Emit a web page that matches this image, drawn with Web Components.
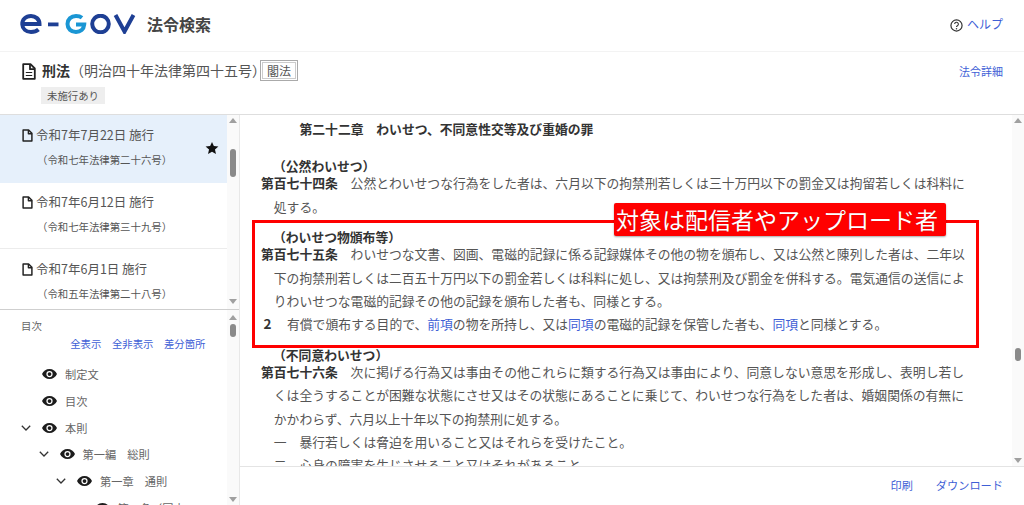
<!DOCTYPE html>
<html lang="ja"><head><meta charset="utf-8"><title>刑法</title>
<style>
html,body{margin:0;height:100%;overflow:hidden;background:#fff;font-family:"Noto Sans CJK JP","Noto Sans",sans-serif;color:#555}
</style></head><body>
<law-app>
  <site-header slot="header"></site-header>
  <law-bar slot="bar"></law-bar>
  <side-panel slot="side">
    <rev-list slot="list">
      <rev-item selected date="令和7年7月22日 施行" num="（令和七年法律第二十六号）"></rev-item>
      <rev-item date="令和7年6月12日 施行" num="（令和七年法律第三十九号）"></rev-item>
      <rev-item date="令和7年6月1日 施行" num="（令和五年法律第二十八号）"></rev-item>
    </rev-list>
    <toc-panel slot="toc">
      <toc-row level="0" label="制定文"></toc-row>
      <toc-row level="0" label="目次"></toc-row>
      <toc-row level="0" open label="本則"></toc-row>
      <toc-row level="1" open label="第一編　総則"></toc-row>
      <toc-row level="2" open label="第一章　通則"></toc-row>
      <toc-row level="3" label="第一条（国内"></toc-row>
    </toc-panel>
  </side-panel>
  <law-main slot="main">
    <law-title>第二十二章　わいせつ、不同意性交等及び重婚の罪</law-title>
    <law-caption>（公然わいせつ）</law-caption>
    <law-article head="第百七十四条">公然とわいせつな行為をした者は、六月以下の拘禁刑若しくは三十万円以下の罰金又は拘留若しくは科料に<br>処する。</law-article>
    <law-caption>（わいせつ物頒布等）</law-caption>
    <law-article head="第百七十五条">わいせつな文書、図画、電磁的記録に係る記録媒体その他の物を頒布し、又は公然と陳列した者は、二年以<br>下の拘禁刑若しくは二百五十万円以下の罰金若しくは科料に処し、又は拘禁刑及び罰金を併科する。電気通信の送信によ<br>りわいせつな電磁的記録その他の記録を頒布した者も、同様とする。</law-article>
    <law-para num="2">有償で頒布する目的で、<law-link>前項</law-link>の物を所持し、又は<law-link>同項</law-link>の電磁的記録を保管した者も、<law-link>同項</law-link>と同様とする。</law-para>
    <law-caption>（不同意わいせつ）</law-caption>
    <law-article head="第百七十六条">次に掲げる行為又は事由その他これらに類する行為又は事由により、同意しない意思を形成し、表明し若し<br>くは全うすることが困難な状態にさせ又はその状態にあることに乗じて、わいせつな行為をした者は、婚姻関係の有無に<br>かかわらず、六月以上十年以下の拘禁刑に処する。</law-article>
    <law-item num="一">暴行若しくは脅迫を用いること又はそれらを受けたこと。</law-item>
    <law-item num="二">心身の障害を生じさせること又はそれがあること。</law-item>
    <annot-box slot="overlay" label="対象は配信者やアップロード者"></annot-box>
  </law-main>
</law-app>
<script>
const BLUE='#3f5fd6';
function def(name,html,extra){
  const tpl=document.createElement('template');tpl.innerHTML=html;
  customElements.define(name,class extends HTMLElement{
    constructor(){super();this.attachShadow({mode:'open'}).appendChild(tpl.content.cloneNode(true));}
    connectedCallback(){extra&&extra(this,this.shadowRoot);}
  });
}
const DOC=`<svg viewBox="0 0 12 14" width="12" height="14" fill="none" stroke="#222" stroke-width="1.6" stroke-linejoin="round"><path d="M1.2 1h6l3.6 3.6V13H1.2z"/><path d="M7 1v4h4"/></svg>`;
const DOCL=`<svg viewBox="0 0 14 17" fill="none" stroke="#222" stroke-width="1.800" stroke-linejoin="round"><path d="M1.200 1.200h7.300l4.300 4.300v10.300H1.200z"/><path d="M8 1.200v5h4.800"/><path stroke-width="1.200" d="M3.800 9.500h6.400M3.800 12.500h6.400"/></svg>`;
const EYE=`<svg viewBox="0 0 24 16" width="15" height="10"><path fill="#1c1c1c" d="M12 0C6.500 0 2 3.300 0 8c2 4.700 6.500 8 12 8s10-3.300 12-8c-2-4.700-6.500-8-12-8z"/><circle cx="12" cy="8" r="5" fill="#fff"/><circle cx="12" cy="8" r="3" fill="#1c1c1c"/></svg>`;
const CHEV=`<svg viewBox="0 0 10 6" width="10" height="6" fill="none" stroke="#333" stroke-width="1.300"><path d="M.8.8 5 5 9.200.8"/></svg>`;

def('law-app',`<style>
:host{display:grid;grid-template-columns:240px 1fr;grid-template-rows:52px 63px 1fr;height:505px;width:1024px;overflow:hidden}
.h{grid-column:1/3;min-height:0}.s,.m{min-height:0;min-width:0;display:flex}
</style>
<div class="h"><slot name="header"></slot></div><div class="h"><slot name="bar"></slot></div>
<div class="s"><slot name="side"></slot></div><div class="m"><slot name="main"></slot></div>`);

def('site-header',`<style>
:host{display:flex;align-items:center;height:52px;box-sizing:border-box;border-bottom:1px solid #f3f3f3;padding:0 21px 3px 20px}
svg.logo{display:block;width:116px;height:20px;flex:none}
b{font-size:16px;font-weight:700;color:#444;margin-left:11px;line-height:20px}
.sp{flex:1}.help{display:flex;align-items:center;gap:4px;color:${BLUE};font-size:12px}
.help svg{display:block;margin-top:3px}.help span{line-height:16px;margin-top:-1px}
</style>
<svg class="logo" viewBox="0 0 116 20" role="img" aria-label="e-Gov">
<g fill="none" stroke="#1e3f94" stroke-width="4"><path d="M2.800 10H19.500C19.500 5 15.500 2 11 2 5.700 2 2 5.500 2.300 10.300 2.500 14.800 6 18 11 18c3 0 5.500-.7 7.500-2.500"/><circle cx="80.500" cy="10" r="8.300"/><path d="M95.500 1 104.500 17.500 113.500 1"/></g>
<rect x="28" y="8.500" width="10.500" height="3.800" fill="#1e3f94"/>
<path fill="none" stroke="#1a96d4" stroke-width="4" d="M62 3.800C60.500 2.600 58.500 2 56 2c-5 0-8.500 3.500-8.500 8s3.500 8 8.500 8c4.500 0 7.800-2.700 8.200-7.500H56"/>
</svg>
<b>法令検索</b><span class="sp"></span>
<div class="help"><svg viewBox="0 0 14 14" width="13" height="13"><circle cx="7" cy="7" r="6" fill="none" stroke="#333" stroke-width="1.300"/><path d="M5 5.500a2 2 0 1 1 3 1.700c-.7.400-1 .8-1 1.500" fill="none" stroke="#333" stroke-width="1.200"/><circle cx="7" cy="10.500" r=".8" fill="#333"/></svg><span>ヘルプ</span></div>`);

def('law-bar',`<style>
:host{display:block;height:63px;box-sizing:border-box;border-bottom:1px solid #dedede;padding:7px 21px 0 22px}
.r{display:flex;align-items:center;height:22px}
svg{display:block;flex:none;margin-right:6px;width:14px;height:17px;margin-top:2px}
b{font-size:14px;color:#333;line-height:22px}span.t{font-size:14px;color:#555;line-height:22px;white-space:nowrap}
button{all:unset;box-sizing:border-box;width:38px;height:21px;margin-left:-6px;margin-top:1px;border:1px solid #aaa;outline:1px solid #ccc;outline-offset:-3px;font-size:12px;text-align:center;line-height:18px;color:#555;background:#fff;flex:none}
.sp{flex:1}a{font-size:11px;color:${BLUE};margin-top:2px}
.tag{display:inline-block;margin:6px 0 0 19px;background:#eee;font-size:10.400px;line-height:17px;padding:0 6px;color:#555}
</style>
<div class="r">${DOCL}<b>刑法</b><span class="t">（明治四十年法律第四十五号）</span><button>閣法</button><span class="sp"></span><a>法令詳細</a></div>
<div class="tag">未施行あり</div>`);

def('fake-scroll',`<style>
:host{display:flex;flex-direction:column;align-items:center;flex:none;width:12px;background:#fafafa;height:100%;box-sizing:border-box}
i{display:block;width:0;height:0;border:4px solid transparent;border-top:0;border-bottom:5px solid #a0a0a0;margin-top:var(--up,3px);flex:none}
i.d{border-bottom:0;border-top:5px solid #a0a0a0;margin:auto 0 var(--dn,3px)}
u{display:block;width:6px;border-radius:3px;background:#8a8a8a;margin-top:var(--t,0);height:var(--h,20px);flex:none}
</style><i></i><u></u><i class="d"></i>`);

def('side-panel',`<style>
:host{display:flex;flex-direction:column;width:240px;height:100%;box-sizing:border-box;border-right:1px solid #e8e8e8}
</style><slot name="list"></slot><slot name="toc"></slot>`);

def('rev-list',`<style>
:host{display:flex;height:195px;flex:none;box-sizing:border-box;border-bottom:1px solid #cfcfcf}
.c{flex:1;min-width:0;overflow:hidden}
fake-scroll{--t:26px;--h:28px;--up:3px;--dn:5px}
</style><div class="c"><slot></slot></div><fake-scroll></fake-scroll>`);

def('rev-item',`<style>
:host{display:block;height:67px;box-sizing:border-box;position:relative;border-bottom:1px solid #ececec;padding:9px 0 0 22px}
:host([selected]){background:#e6f0fb;border-bottom-color:#e6f0fb;height:68px;margin-bottom:-1px}
.d{display:flex;align-items:center;gap:3px;font-size:12.500px;line-height:22px;color:#555;white-space:nowrap}
.n{font-size:10.400px;line-height:16px;margin:6px 0 0 15px;color:#555;white-space:nowrap}
svg.star{position:absolute;left:205px;top:26px;display:none}
:host([selected]) svg.star{display:block}
svg.doc{display:block;width:11px;height:13px}
</style><div class="d">${DOC.replace('<svg ','<svg class="doc" ')}<span id="d"></span></div><div class="n" id="n"></div>
<svg class="star" viewBox="0 0 24 24" width="14" height="14"><path fill="#111" d="M12 1.500l3.200 7.200 7.800.8-5.900 5.200 1.700 7.700L12 18.400 5.200 22.400l1.700-7.700L1 9.500l7.800-.8z"/></svg>`,
(h,r)=>{r.getElementById('d').textContent=h.getAttribute('date');r.getElementById('n').textContent=h.getAttribute('num');});

def('toc-panel',`<style>
:host{display:flex;flex:1;min-height:0;overflow:hidden}
.c{flex:1;min-width:0;overflow:hidden;padding:9px 0 0 21px;box-sizing:border-box}
.t{font-size:10.400px;line-height:14px;color:#666}
.l{display:flex;justify-content:flex-end;gap:10.500px;font-size:10.400px;line-height:14px;color:${BLUE};padding-right:21.500px;margin-top:4px;white-space:nowrap}
.rows{margin-top:10px}
fake-scroll{--t:4px;--h:13px;--up:5px;--dn:3px}
</style><div class="c"><div class="t">目次</div><div class="l"><span>全表示</span><span>全非表示</span><span>差分箇所</span></div><div class="rows"><slot></slot></div></div><fake-scroll></fake-scroll>`);

def('toc-row',`<style>
:host{display:flex;align-items:center;height:26.700px;font-size:11.200px;color:#666;white-space:nowrap}
.c{width:21px;flex:none;display:flex}.e{flex:none;display:flex;margin-right:8px}
</style><span class="c" id="c"></span><span class="e">${EYE}</span><span id="l"></span>`,
(h,r)=>{h.style.paddingLeft=(+h.getAttribute('level')*17.5)+'px';
 if(h.hasAttribute('open'))r.getElementById('c').innerHTML=CHEV;
 r.getElementById('l').textContent=h.getAttribute('label');});

def('law-main',`<style>
:host{display:flex;flex-direction:column;flex:1;min-width:0;height:100%;position:relative}
.top{flex:1;min-height:0;display:flex}
.c{flex:1;min-width:0;overflow:hidden;padding:2px 0 0 21px;box-sizing:border-box;white-space:nowrap;position:relative}
fake-scroll{--t:225px;--h:13px;--up:3px;--dn:3px}
.b{height:39px;flex:none;box-sizing:border-box;border-top:1px solid #e4e4e4;display:flex;justify-content:flex-end;align-items:center;gap:23px;padding:0 21px 2px 0;font-size:11.200px;color:${BLUE}}
</style><div class="top"><div class="c"><slot></slot><slot name="overlay"></slot></div><fake-scroll></fake-scroll></div>
<div class="b"><span>印刷</span><span>ダウンロード</span></div>`);

const LINE=`:host{display:block;font-size:12.800px;line-height:23.300px;color:#555}`;
def('law-title',`<style>${LINE}:host{font-weight:700;color:#333;padding-left:38.500px}</style><slot></slot>`);
def('law-caption',`<style>:host{display:block;font-size:12.800px;line-height:10.500px;height:10px;font-weight:700;color:#333;margin-top:14.500px;padding-left:12px}:host(:first-of-type){margin-top:21px}</style><slot></slot>`);
def('law-article',`<style>${LINE}:host{padding-left:12.800px;text-indent:-12.800px}b{color:#333;margin-right:12.800px}</style><b id="h"></b><slot></slot>`,
 (h,r)=>{r.getElementById('h').textContent=h.getAttribute('head');});
def('law-para',`<style>${LINE}:host{display:flex}b{color:#333;width:26px;padding-left:2.500px;box-sizing:border-box;flex:none;font-size:13.500px}</style><b id="h"></b><span><slot></slot></span>`,
 (h,r)=>{r.getElementById('h').textContent=h.getAttribute('num');});
def('law-item',`<style>${LINE}:host{display:flex;padding-left:12.800px}span.n{width:25.600px;flex:none}</style><span class="n" id="h"></span><span><slot></slot></span>`,
 (h,r)=>{r.getElementById('h').textContent=h.getAttribute('num');});
def('law-link',`<style>:host{display:inline;color:${BLUE}}</style><slot></slot>`);

def('annot-box',`<style>
:host{position:absolute;left:12px;top:105px;width:727px;height:128px;box-sizing:border-box;border:3px solid #f00;pointer-events:none}
div{position:absolute;left:359px;top:-20px;width:332px;height:33px;box-sizing:border-box;padding-right:6px;background:#f00;border-radius:2px;color:#fff;font-size:23px;line-height:33px;text-align:center;white-space:nowrap;box-shadow:0 1px 2px rgba(0,0,0,.35);text-shadow:0 0 1px rgba(0,0,0,.3)}
</style><div id="t"></div>`,(h,r)=>{r.getElementById('t').textContent=h.getAttribute('label');});
</script>
</body></html>
